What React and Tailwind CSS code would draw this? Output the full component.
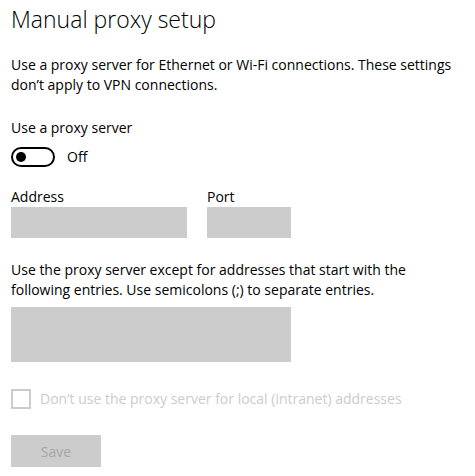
export default function App() {
  return (
    <div
      className="w-[475px] h-[476px] bg-white text-black px-[11px] overflow-hidden"
      style={{ fontFamily: '"Open Sans", "Noto Sans", sans-serif' }}
    >
      <h1 className="text-[23px] font-light leading-[30px] pt-[4px] text-[#000]">Manual proxy setup</h1>

      <p className="mt-[21px] text-[14px] leading-[20px] max-w-[460px]">
        Use a proxy server for Ethernet or Wi-Fi connections. These settings don’t apply to VPN connections.
      </p>

      <div className="mt-[23px] text-[14px] leading-[20px]">Use a proxy server</div>
      <div className="mt-[9px] flex items-center gap-[12px]">
        <div className="w-[44px] h-[20px] rounded-full border-2 border-black flex items-center px-[3px]">
          <div className="w-[10px] h-[10px] rounded-full bg-black" />
        </div>
        <span className="text-[14px] leading-[20px]">Off</span>
      </div>

      <div className="mt-[20px] flex gap-[20px]">
        <div className="flex flex-col">
          <label className="text-[14px] leading-[20px]">Address</label>
          <div className="w-[176px] h-[31px] bg-[#cccccc]" />
        </div>
        <div className="flex flex-col">
          <label className="text-[14px] leading-[20px]">Port</label>
          <div className="w-[84px] h-[31px] bg-[#cccccc]" />
        </div>
      </div>

      <p className="mt-[22px] text-[14px] leading-[20px] max-w-[460px]">
        Use the proxy server except for addresses that start with the following entries. Use semicolons (;) to separate entries.
      </p>
      <div className="mt-[7px] w-[280px] h-[55px] bg-[#cccccc]" />

      <div className="mt-[27px] flex items-center gap-[9px]">
        <div className="w-[20px] h-[20px] border-2 border-[#cccccc]" />
        <span className="text-[14px] leading-[20px] text-[#cccccc]">
          Don’t use the proxy server for local (intranet) addresses
        </span>
      </div>

      <button className="mt-[26px] w-[90px] h-[32px] bg-[#cccccc] text-[14px] text-[#a6a6a6] block">
        Save
      </button>
    </div>
  );
}
